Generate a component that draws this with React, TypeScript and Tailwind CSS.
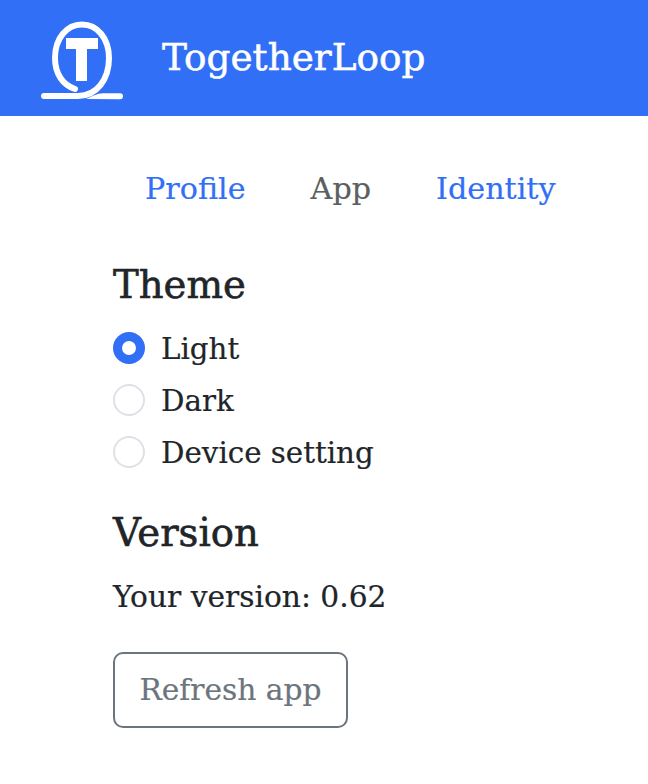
export default function App() {
  return (
    <div className="min-h-[784px] bg-white font-['DejaVu_Serif',serif] text-[#212529]">
      <header className="flex h-[116px] items-center bg-[#316ff6] pl-[40px]">
        <svg width="84" height="116" viewBox="40 0 84 116" className="shrink-0">
          <path d="M44 96 H78 C97 96 109 79 109 58 C109 38 97 24.5 82 24.5 C67 24.5 55 38 55 58 C55 74 63 85 75 89" fill="none" stroke="#fff" strokeWidth="6" strokeLinecap="round" />
          <path d="M86 99 C92 96.5 97 93.2 103 93.2 H120 A3 3 0 0 1 120 99.2 Z" fill="#fff" />
          <path d="M66 38 H98 V49 H87 V81 H76 V49 H66 Z" fill="#fff" />
        </svg>
        <span className="ml-[38px] text-[37.4px] leading-none text-white [-webkit-text-stroke:0.5px_#fff]">TogetherLoop</span>
      </header>
      <main className="px-[113px]">
        <nav className="flex gap-[65px] pl-[32px] pt-[54px] text-[30.2px] leading-[38px] [-webkit-text-stroke:0.2px]">
          <span className="text-[#316ff6]">Profile</span>
          <span className="text-[#5c5f62]">App</span>
          <span className="text-[#316ff6]">Identity</span>
        </nav>
        <h2 className="mt-[55px] text-[38.6px] leading-[44px] [-webkit-text-stroke:0.6px_#212529]">Theme</h2>
        <div className="mt-[16px] flex flex-col text-[29.3px] leading-[52px] [-webkit-text-stroke:0.2px]">
          <label className="flex items-center gap-[16px]">
            <span className="mb-[2px] h-[32px] w-[32px] rounded-full border-[9px] border-[#316ff6] bg-white" />
            Light
          </label>
          <label className="flex items-center gap-[16px]">
            <span className="mb-[2px] h-[32px] w-[32px] rounded-full border-2 border-[#dee2e6] bg-white" />
            Dark
          </label>
          <label className="flex items-center gap-[16px]">
            <span className="mb-[2px] h-[32px] w-[32px] rounded-full border-2 border-[#dee2e6] bg-white" />
            Device setting
          </label>
        </div>
        <h2 className="mt-[32px] text-[38.6px] leading-[44px] [-webkit-text-stroke:0.6px_#212529]">Version</h2>
        <p className="mt-[20px] text-[29.7px] leading-[44px] [-webkit-text-stroke:0.2px]">Your version: 0.62</p>
        <button className="mt-[33px] flex h-[76px] w-[235px] items-center justify-center rounded-[10px] border-2 border-[#6c757d] bg-white pt-[1px] text-[29.7px] text-[#6c757d] [-webkit-text-stroke:0.2px]">
          Refresh app
        </button>
      </main>
    </div>
  );
}
